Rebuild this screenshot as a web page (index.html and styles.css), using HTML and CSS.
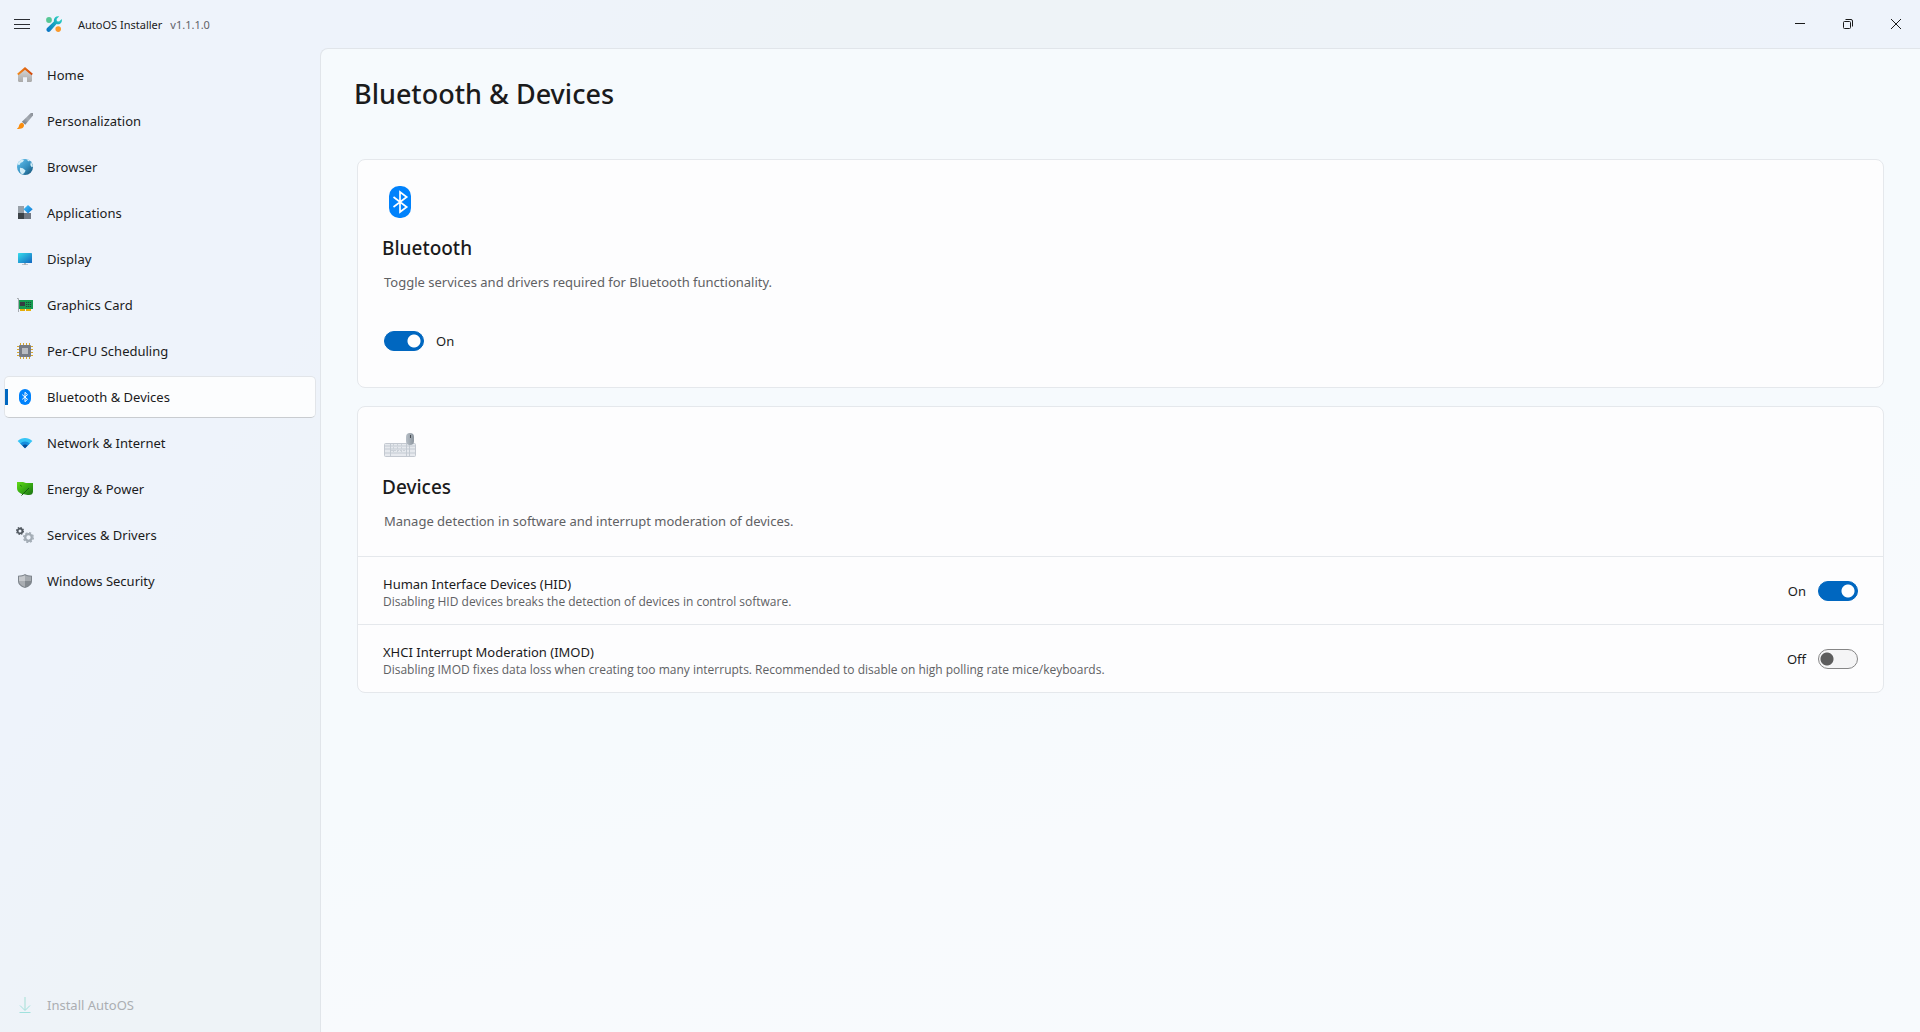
FILE: index.html
```html
<!DOCTYPE html>
<html lang="en">
<head>
<meta charset="utf-8">
<title>AutoOS Installer</title>
<link rel="stylesheet" href="styles.css">
</head>
<body>
<div class="window">
  <header class="titlebar">
    <button class="menu-button" type="button" aria-label="Menu">
      <svg width="16" height="16" viewBox="0 0 16 16" stroke="#2b2d33" stroke-width="1"><path d="M0 3.500h16M0 8.500h16M0 12.500h16"/></svg>
    </button>
    <svg class="logo" width="16" height="16" viewBox="0 0 16 16">
      <defs><linearGradient id="wrench" x1="1" y1="0" x2="0" y2="1"><stop offset="0" stop-color="#35dcc4"/><stop offset=".5" stop-color="#16a3c0"/><stop offset="1" stop-color="#0a70c8"/></linearGradient></defs>
      <circle cx="3" cy="4" r="2.900" fill="#57c795"/>
      <path d="M13.300.3 10.600 3l.3 2.200 2.200.3 2.700-2.600c.5 2.100-.1 3.900-1.700 4.800-1.200.7-2.500.7-3.600.3L4.200 15.200c-.9.900-2.300.9-3.100 0-.9-.9-.9-2.200 0-3.100L7.900 5.600C7.400 2.400 9.700-.5 13.300.3z" fill="url(#wrench)"/>
      <circle cx="12.200" cy="13.100" r="2.800" fill="#fb9a2c"/>
    </svg>
    <span class="app-name">AutoOS Installer</span>
    <span class="version">v1.1.1.0</span>
    <div class="caption-buttons">
      <button type="button" aria-label="Minimize"><svg width="10" height="10" viewBox="0 0 10 10" stroke="#1a1a1a"><path d="M0 4.500h10"/></svg></button>
      <button type="button" aria-label="Restore"><svg width="10" height="10" viewBox="0 0 10 10" fill="none" stroke="#1a1a1a"><rect x=".5" y="2.500" width="7" height="7" rx="1"/><path d="M2.500.5H8a1.500 1.500 0 0 1 1.500 1.500v5.500"/></svg></button>
      <button type="button" aria-label="Close"><svg width="10" height="10" viewBox="0 0 10 10" stroke="#1a1a1a"><path d="m0 0 10 10M10 0 0 10"/></svg></button>
    </div>
  </header>

  <nav class="sidebar">
    <a class="nav-item" href="#home">
      <svg width="16" height="16" viewBox="0 0 16 16">
        <defs><linearGradient id="wall" x2="0" y2="1"><stop offset="0" stop-color="#d8d8d8"/><stop offset="1" stop-color="#a9a9a9"/></linearGradient><linearGradient id="roof"><stop offset="0" stop-color="#f28a1c"/><stop offset="1" stop-color="#d1480c"/></linearGradient></defs>
        <path d="M1 7.500 8 1.500l7 6v6.300c0 .7-.5 1.200-1.200 1.200H10v-4.800H6V15H2.200C1.500 15 1 14.500 1 13.800z" fill="url(#wall)"/>
        <path d="M.8 7.500 8 1.400l7.200 6.100" fill="none" stroke="url(#roof)" stroke-width="2"/>
      </svg>
      <span>Home</span></a>
    <a class="nav-item" href="#personalization">
      <svg width="16" height="16" viewBox="0 0 16 16">
        <defs><linearGradient id="handle" x1="1" y1="0" x2="0" y2="1"><stop offset="0" stop-color="#8b9098"/><stop offset=".5" stop-color="#a5abb3"/><stop offset="1" stop-color="#6d727a"/></linearGradient></defs>
        <path d="M13.800 0H16v2.600L8.300 11.800 4.900 8.800z" fill="url(#handle)"/>
        <path d="M4.300 9.900c1.200-.4 2.800 1 2.700 2.500C6.900 14.700 4.400 16 .2 16c-.4-.9 1.200-1.100 1.500-2.300.4-1.600.8-3.200 2.600-3.800z" fill="#fa8d0e"/>
      </svg>
      <span>Personalization</span></a>
    <a class="nav-item" href="#browser">
      <svg width="16" height="16" viewBox="0 0 16 16">
        <defs><linearGradient id="globe" x2="1" y2="1"><stop offset="0" stop-color="#68c4f1"/><stop offset=".55" stop-color="#3490c0"/><stop offset="1" stop-color="#174e70"/></linearGradient></defs>
        <circle cx="8" cy="8" r="8" fill="url(#globe)"/>
        <path d="M.4 5.500C1.200 3 3.300.9 5.600.5L7 1.400 5.300 3.200 3.700 3.700 2.500 6zM9.600.3c1.400.2 2.500.8 3.500 1.600l-2 .3zM13.800 3.200c1.300 1.300 2 2.800 2.100 4.400l-1.200.7-1.400-2.400zM3 8.700l2.800.5 2.800 2.400-1 2-1.800 1.700C2.800 14.300 2.700 11.500 3 8.700z" fill="#d3eef8"/>
      </svg>
      <span>Browser</span></a>
    <a class="nav-item" href="#applications">
      <svg width="16" height="16" viewBox="0 0 16 16">
        <defs><linearGradient id="tile" x2="1" y2="1"><stop offset="0" stop-color="#45c6fb"/><stop offset="1" stop-color="#0a70cf"/></linearGradient></defs>
        <path d="M1 1h6v7H1z" fill="#98a0a8"/><path d="M1 8h6v6H1z" fill="#3c4247"/><path d="M7 8h7v6H7z" fill="#727984"/>
        <path d="m11 0 4.700 4.200L11 8.600 6.500 4.200z" fill="url(#tile)"/>
      </svg>
      <span>Applications</span></a>
    <a class="nav-item" href="#display">
      <svg width="16" height="16" viewBox="0 0 16 16">
        <defs><linearGradient id="screen" x2="1" y2="1"><stop offset="0" stop-color="#35dcec"/><stop offset="1" stop-color="#1366c0"/></linearGradient></defs>
        <path d="M7 12h2v1.200h2V14H5v-.8h2z" fill="#aeb4ba"/><rect x="1" y="2" width="14" height="10" rx=".6" fill="url(#screen)"/>
      </svg>
      <span>Display</span></a>
    <a class="nav-item" href="#graphics">
      <svg width="16" height="16" viewBox="0 0 16 16">
        <path d="M0 1.500h1.500V15" fill="none" stroke="#a7abb0"/><path d="M3 12h5v2H3zM9 12h5v2H9z" fill="#e5ad0a"/>
        <path d="M2 3h14v9H2z" fill="#169b50"/><path d="M3 5h5v4H3z" fill="#363c42"/>
        <path d="M9 5.500h5M9 7.500h5M9 9.500h1.500M11 9.500h3" stroke="#20433a" stroke-dasharray="1.300 .7"/>
      </svg>
      <span>Graphics Card</span></a>
    <a class="nav-item" href="#cpu">
      <svg width="16" height="16" viewBox="0 0 16 16">
        <path d="M3.500 0v16M6.500 0v16M9.500 0v16M12.500 0v16M0 3.500h16M0 6.500h16M0 9.500h16M0 12.500h16" stroke="#d8a72d"/>
        <rect x="2" y="2" width="12" height="12" rx="1" fill="#777c85"/><path d="M5 5h6v6H5z" fill="#b9bcc1"/>
      </svg>
      <span>Per-CPU Scheduling</span></a>
    <a class="nav-item selected" href="#bluetooth" aria-current="page">
      <svg width="16" height="16" viewBox="0 0 16 16"><rect x="2" width="12" height="16" rx="6" fill="#0082fc"/><path d="m5.200 5.600 5.300 4.700L8 12.700V3.300l2.500 2.400-5.300 4.700" fill="none" stroke="#fff" stroke-width="1"/></svg>
      <span>Bluetooth &amp; Devices</span></a>
    <a class="nav-item" href="#network">
      <svg width="16" height="16" viewBox="0 0 16 16">
        <path d="M.6 6C4.800 2 11.200 2 15.400 6L8 13.300z" fill="#36c4f5"/><path d="M3.200 8.500c2.700-2.800 6.900-2.800 9.600 0L8 13.300z" fill="#168ddc"/><path d="M5.300 10.600c1.600-1.500 3.800-1.500 5.400 0L8 13.300z" fill="#0b4d99"/>
      </svg>
      <span>Network &amp; Internet</span></a>
    <a class="nav-item" href="#energy">
      <svg width="16" height="16" viewBox="0 0 16 16">
        <defs><linearGradient id="leaf" x2="1" y2="1"><stop offset="0" stop-color="#63db17"/><stop offset=".5" stop-color="#37ab13"/><stop offset="1" stop-color="#1c7113"/></linearGradient></defs>
        <path d="M0 1h6c1.200 0 1.800 1 3 1h7v8.500c0 2.500-1.600 3.500-4 3.500-2.200 0-3.300-.8-5-.8C3 13 0 10.500 0 7z" fill="url(#leaf)"/><path d="M4.500 14.500 12 7" fill="none" stroke="#165b12"/><path d="m3 4 2 1.500" stroke="#22820f"/>
      </svg>
      <span>Energy &amp; Power</span></a>
    <a class="nav-item" href="#services">
      <svg class="wide-icon" width="18" height="16" viewBox="0 0 18 16" fill="none">
        <circle cx="4" cy="4" r="2.400" stroke="#50575f" stroke-width="1.800"/><circle cx="4" cy="4" r="3.500" stroke="#50575f" stroke-width="1.100" stroke-dasharray="1.500 1.250"/>
        <circle cx="12.500" cy="10.500" r="3.300" stroke="#a3acb5" stroke-width="2.300"/><circle cx="12.500" cy="10.500" r="4.800" stroke="#a3acb5" stroke-width="1.400" stroke-dasharray="2.100 1.670"/>
      </svg>
      <span>Services &amp; Drivers</span></a>
    <a class="nav-item" href="#security">
      <svg width="16" height="16" viewBox="0 0 16 16">
        <path d="M8 1c1.500 1.200 4.200 1.700 7 1.700V8c0 3.500-3 5.800-7 7-4-1.200-7-3.500-7-7V2.700C3.800 2.700 6.500 2.200 8 1z" fill="#7e858c"/>
        <path d="M8 2.200V8H2V3.600c2.500 0 4.500-.5 6-1.400z" fill="#c5c8cc"/><path d="M8 2.200c1.500.9 3.500 1.400 6 1.400V8H8z" fill="#a5aaaf"/><path d="M2 8h6v6c-3.500-1.200-6-3.200-6-6z" fill="#a9adb2"/><path d="M8 8h6c0 2.800-2.500 4.800-6 6z" fill="#83898f"/>
      </svg>
      <span>Windows Security</span></a>
    <a class="nav-item install" aria-disabled="true">
      <svg width="16" height="16" viewBox="0 0 16 16" fill="none"><path d="M8 0v13" stroke="#c9e9e7" stroke-width="2"/><path d="m3 8.500 5 5 5-5M2.500 15.500h11" stroke="#a0e1dd" stroke-width="1"/></svg>
      <span>Install AutoOS</span></a>
  </nav>

  <main class="content">
    <h1>Bluetooth &amp; Devices</h1>

    <section class="card">
      <div class="card-head">
        <svg width="32" height="32" viewBox="0 0 32 32"><rect x="5" width="22" height="32" rx="10" fill="#0082fc"/><path d="m9.500 11 13.200 10L16 26V6l6.700 5L9.500 21" fill="none" stroke="#fff" stroke-width="1.700"/></svg>
        <h2>Bluetooth</h2>
        <p>Toggle services and drivers required for Bluetooth functionality.</p>
      </div>
      <label class="switch card-switch"><input type="checkbox" role="switch" checked aria-label="Bluetooth"><span>On</span></label>
    </section>

    <section class="card">
      <div class="card-head devices">
        <svg width="32" height="28" viewBox="0 0 32 28">
          <defs><linearGradient id="mouse"><stop offset="0" stop-color="#b7bfc7"/><stop offset="1" stop-color="#8c959e"/></linearGradient></defs>
          <rect x=".5" y="14.500" width="31" height="13" rx="1" fill="#e6e9ee" stroke="#c3c8d0"/>
          <path d="M1 17h30M1 20h30M1 24h30M6.500 15v12M25.500 15v12M22.500 15v12" stroke="#c3cad2"/>
          <path d="M7 21.500h15M9.500 15v8M13.500 15v8M17.500 15v8" stroke="#cbd1d8" stroke-dasharray="2 1"/>
          <rect x="22" y="4" width="8" height="12" rx="4" fill="url(#mouse)"/><path d="M26.500 6v3" stroke="#454b52"/>
        </svg>
        <h2>Devices</h2>
        <p>Manage detection in software and interrupt moderation of devices.</p>
      </div>
      <div class="setting">
        <div class="setting-text">
          <label for="hid">Human Interface Devices (HID)</label>
          <p>Disabling HID devices breaks the detection of devices in control software.</p>
        </div>
        <div class="switch"><span>On</span><input id="hid" type="checkbox" role="switch" checked></div>
      </div>
      <div class="setting">
        <div class="setting-text">
          <label for="imod">XHCI Interrupt Moderation (IMOD)</label>
          <p>Disabling IMOD fixes data loss when creating too many interrupts. Recommended to disable on high polling rate mice/keyboards.</p>
        </div>
        <div class="switch"><span>Off</span><input id="imod" type="checkbox" role="switch"></div>
      </div>
    </section>
  </main>
</div>
</body>
</html>
```
FILE: styles.css
```css
* {
  box-sizing: border-box;
}

body {
  margin: 0;
  font: 13px/20px "Segoe UI", "Noto Sans", "Open Sans", sans-serif;
  color: #1b1b1c;
}

h1, h2, p {
  margin: 0;
}

svg {
  display: block;
  flex: none;
}

.window {
  display: grid;
  grid-template: 48px 1fr / 320px minmax(0, 1fr);
  min-height: 100vh;
  background: linear-gradient(125deg, #eef3fb 0%, #eef3fb 20%, #eef3f7 32%, #eef3f7 45%, #eef3fb 70%);
}

/* Title bar */
.titlebar {
  grid-column: 1 / -1;
  display: flex;
  align-items: center;
  padding-left: 14px;
}

.menu-button,
.caption-buttons button {
  display: grid;
  place-items: center;
  padding: 0;
  border: 0;
  background: none;
}

.logo {
  margin: 0 16px;
}

.app-name,
.version {
  padding-top: 1px;
  font-size: 11px;
  line-height: 16px;
}

.version {
  margin-left: 8px;
  color: #5f6268;
}

.caption-buttons {
  display: flex;
  align-self: stretch;
  margin-left: auto;
}

.caption-buttons button {
  width: 48px;
}

/* Navigation */
.sidebar {
  display: flex;
  flex-direction: column;
  gap: 4px;
  padding: 6px 4px;
}

.nav-item {
  display: flex;
  align-items: center;
  gap: 14px;
  height: 42px;
  padding-left: 12px;
  border: 1px solid transparent;
  border-radius: 5px;
  color: inherit;
  text-decoration: none;
}

.wide-icon {
  margin: 0 -1px;
}

.selected {
  border-color: #e2e5e9;
  border-bottom-color: #c9ccd0;
  background: linear-gradient(#0067c0, #0067c0) 0 50% / 3px 16px no-repeat #fcfdfe;
}

.install {
  margin-top: auto;
  color: #abaeb2;
}

/* Page */
.content {
  padding: 25px 36px 36px;
  border: solid #e1e5ea;
  border-width: 1px 0 0 1px;
  border-radius: 8px 0 0 0;
  background: linear-gradient(165deg, #f6fafd 0%, #f6fafd 55%, #f8fafd 70%, #f7fafd 100%);
}

h1 {
  margin: 0 0 45px -3px;
  font-size: 27px;
  line-height: 40px;
  font-weight: 500;
}

.card {
  margin-bottom: 18px;
  border: 1px solid #e5e8ec;
  border-radius: 8px;
  background: #fdfdfe;
}

.card-head {
  padding: 26px 26px 0;
}

.devices {
  height: 149px;
  padding-top: 22px;
}

h2 {
  margin: 16px 0 10px -2px;
  font-size: 19px;
  line-height: 28px;
  font-weight: 500;
}

.card-head p,
.setting-text p {
  color: #606164;
}

.card-switch {
  padding: 39px 26px 36px;
}

.setting {
  display: flex;
  align-items: center;
  justify-content: space-between;
  height: 68px;
  padding: 0 25px;
  border-top: 1px solid #e5e8ec;
}

.setting-text {
  padding-top: 4px;
}

.setting-text label {
  display: block;
  line-height: 18px;
}

.setting-text p {
  font-family: "Segoe UI", "Open Sans", "Noto Sans", sans-serif;
  font-size: 12px;
  line-height: 18px;
}

.switch {
  display: flex;
  align-items: center;
  gap: 12px;
}

.switch input {
  appearance: none;
  width: 40px;
  height: 20px;
  margin: 0;
  border: 1px solid #868686;
  border-radius: 10px;
  background: radial-gradient(circle at 8px 9px, #5d5d5d 6px, transparent 7px) #f5f5f6;
}

.switch input:checked {
  border-color: #0067c0;
  background: radial-gradient(circle at 29px 9px, #fff 6px, transparent 7px) #0067c0;
}
```
